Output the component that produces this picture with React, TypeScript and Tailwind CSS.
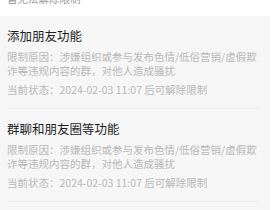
import React from "react";

const font = { fontFamily: '"Noto Sans CJK SC", "Noto Sans", sans-serif' };

function Section({ title }: { title: string }) {
  return (
    <div className="pt-[10px] pb-[11px] border-b border-[#ececec] mr-[12px]">
      <div className="text-[12.5px] leading-[20px] font-normal text-[#1f1f1f]">{title}</div>
      <div className="mt-[4px] text-[10.5px] leading-[14px] text-[#b8b8b8]">
        限制原因：涉嫌组织或参与发布色情/低俗营销/虚假欺诈等违规内容的群，对他人造成骚扰
      </div>
      <div className="mt-[5px] text-[10.5px] leading-[14px] text-[#b8b8b8]">
        当前状态：2024-02-03 11:07 后可解除限制
      </div>
    </div>
  );
}

export default function App() {
  return (
    <div className="w-[280px] h-[210px] overflow-hidden bg-white" style={font}>
      <div className="mt-[-8px] px-[7px] text-[10.5px] leading-[14px] text-[#999999] h-[14px]">
        暂无法解除限制
      </div>
      <div className="mt-[10px] w-[270px] bg-[#f6f6f6] pl-[7px] h-[200px]">
        <Section title="添加朋友功能" />
        <Section title="群聊和朋友圈等功能" />
      </div>
    </div>
  );
}
